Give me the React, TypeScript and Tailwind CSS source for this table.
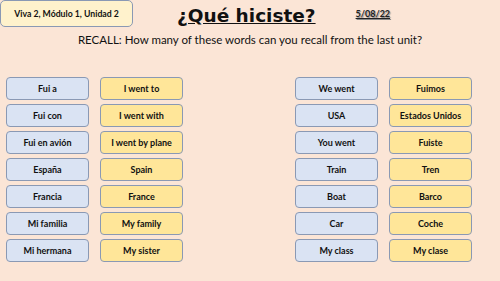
import React from "react";

const left: [string, string][] = [
  ["Fui a", "I went to"],
  ["Fui con", "I went with"],
  ["Fui en avión", "I went by plane"],
  ["España", "Spain"],
  ["Francia", "France"],
  ["Mi familia", "My family"],
  ["Mi hermana", "My sister"],
];
const right: [string, string][] = [
  ["We went", "Fuimos"],
  ["USA", "Estados Unidos"],
  ["You went", "Fuiste"],
  ["Train", "Tren"],
  ["Boat", "Barco"],
  ["Car", "Coche"],
  ["My class", "My clase"],
];

function Box({ text, yellow }: { text: string; yellow?: boolean }) {
  return (
    <div
      className={
        "w-[83px] h-[23px] rounded-[4px] border border-[#8a99b4] flex items-center justify-center text-[9px] font-bold text-[#111] " +
        (yellow ? "bg-[#ffe699]" : "bg-[#dae3f3]")
      }
    >
      {text}
    </div>
  );
}

function Group({ rows }: { rows: [string, string][] }) {
  return (
    <div className="flex flex-col gap-[4px]">
      {rows.map(([a, b]) => (
        <div key={a} className="flex gap-[11px]">
          <Box text={a} />
          <Box text={b} yellow />
        </div>
      ))}
    </div>
  );
}

export default function App() {
  return (
    <div
      className="w-[500px] h-[281px] bg-[#fbe5d6] relative overflow-hidden"
      style={{ fontFamily: "Lato, 'Open Sans', sans-serif" }}
    >
      <div className="flex items-start h-[29px]">
        <div className="w-[133px] h-[27px] bg-[#fff2cc] border border-[#8a99b4] rounded-[5px] flex items-center justify-center text-[8.7px] font-bold text-[#111]">
          Viva 2, Módulo 1, Unidad 2
        </div>
        <div
          className="ml-[44px] mt-[4px] text-[18.5px] leading-[24px] font-bold underline text-[#111]"
          style={{ fontFamily: "'DejaVu Sans', sans-serif" }}
        >
          ¿Qué hiciste?
        </div>
        <div className="ml-[40px] mt-[8px] text-[9px] leading-[12px] font-bold underline text-[#222] [text-shadow:1px_1px_1px_#888]">
          5/08/22
        </div>
      </div>
      <div className="text-center text-[11.5px] leading-[16px] text-[#111] mt-[3px]">
        RECALL: How many of these words can you recall from the last unit?
      </div>
      <div className="flex mt-[29px] pl-[6px]">
        <Group rows={left} />
        <div className="ml-[112px]">
          <Group rows={right} />
        </div>
      </div>
    </div>
  );
}
